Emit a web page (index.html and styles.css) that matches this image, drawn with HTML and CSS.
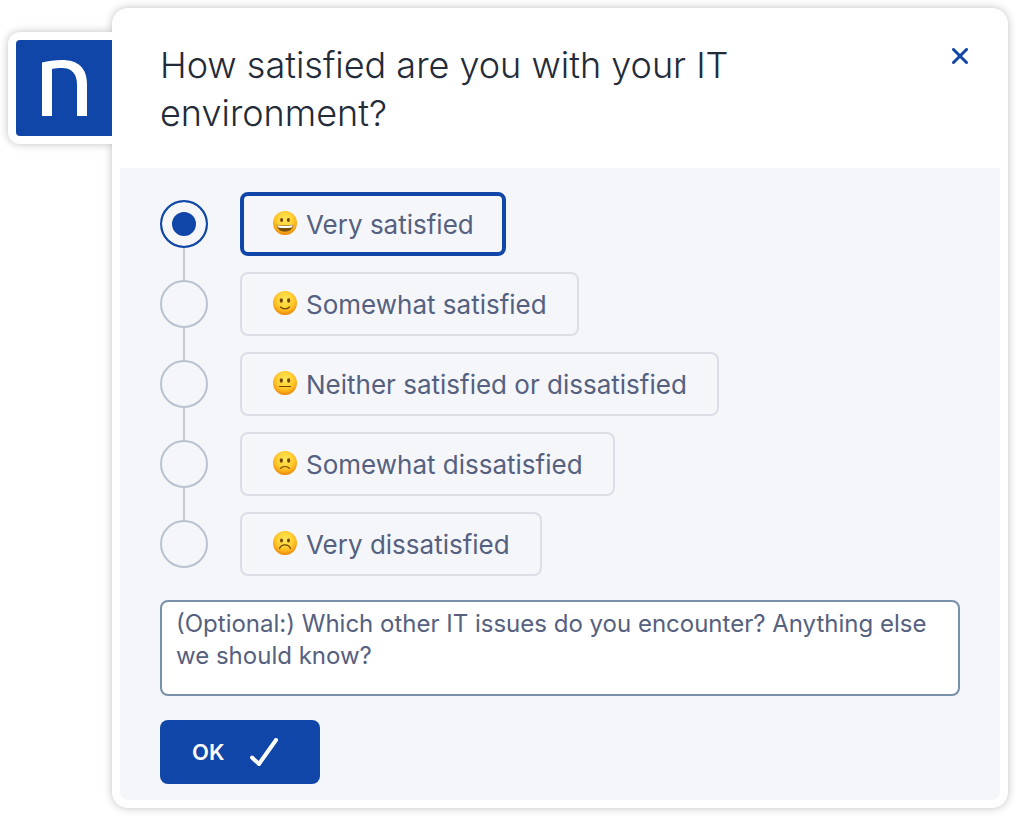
FILE: index.html
```html
<!DOCTYPE html>
<html lang="en">
<head>
    <meta charset="UTF-8">
    <meta name="viewport" content="width=device-width, initial-scale=1.0">
    <title>IT Satisfaction Survey</title>
    <link rel="stylesheet" href="styles.css">
</head>
<body>

<!-- Shared parts of the faces -->
<svg class="defs" width="0" height="0" aria-hidden="true">
    <defs>
        <radialGradient id="skin" cx="0.5" cy="0.36" r="0.64">
            <stop offset="0" stop-color="#ffe65c"/>
            <stop offset="0.45" stop-color="#ffd437"/>
            <stop offset="0.75" stop-color="#fdb41c"/>
            <stop offset="1" stop-color="#e88405"/>
        </radialGradient>
        <g id="face">
            <circle cx="12" cy="12" r="12" fill="url(#skin)"/>
            <ellipse cx="8.300" cy="9.500" rx="1.600" ry="2.300" fill="#704506"/>
            <ellipse cx="15.700" cy="9.500" rx="1.600" ry="2.300" fill="#704506"/>
        </g>
    </defs>
</svg>

<div class="survey">
    <div class="logo">
        <svg viewBox="0 0 96 96" role="img" aria-label="Logo">
            <path fill="#fff" d="M26 76V22.600C32 21 39 20 46 20C62 20 71 28 71 44V76H61V45C61 34 56 28 46 28C42 28 39 28.400 36 29V76Z"/>
        </svg>
    </div>

    <form class="panel">
        <header class="header">
            <h1>How satisfied are you with your IT environment?</h1>
            <button type="button" class="close" aria-label="Close">
                <svg viewBox="0 0 16 16"><path d="M1.500 1.500L14.500 14.500M14.500 1.500L1.500 14.500"/></svg>
            </button>
        </header>

        <div class="content">
            <!-- ANSWERS -->
            <div class="options" role="radiogroup" aria-label="Satisfaction">
                <div class="option">
                    <input type="radio" name="satisfaction" id="verySatisfied" checked>
                    <label for="verySatisfied">
                        <svg class="emoji" viewBox="0 0 24 24" aria-hidden="true">
                            <circle cx="12" cy="12" r="12" fill="url(#skin)"/>
                            <ellipse cx="8.600" cy="9" rx="1.500" ry="2" fill="#704506"/>
                            <ellipse cx="15.400" cy="9" rx="1.500" ry="2" fill="#704506"/>
                            <path d="M3.600 13.800C9 14.700 15 14.700 20.400 13.800C20 18.200 16.500 20.700 12 20.700S4 18.200 3.600 13.800Z" fill="#77500c"/>
                            <path d="M4.200 14.300C9 15.200 15 15.200 19.800 14.300C19.600 15.500 19.300 16.200 18.600 16.500C14.500 17.300 9.500 17.300 5.400 16.500C4.700 16.200 4.400 15.500 4.200 14.300Z" fill="#fff"/>
                        </svg>
                        <span>Very satisfied</span>
                    </label>
                </div>
                <div class="option">
                    <input type="radio" name="satisfaction" id="somewhatSatisfied">
                    <label for="somewhatSatisfied">
                        <svg class="emoji" viewBox="0 0 24 24" aria-hidden="true">
                            <use href="#face"/>
                            <path class="mouth" d="M7.500 16C9.800 18.500 14.200 18.500 16.500 16"/>
                        </svg>
                        <span>Somewhat satisfied</span>
                    </label>
                </div>
                <div class="option">
                    <input type="radio" name="satisfaction" id="neither">
                    <label for="neither">
                        <svg class="emoji" viewBox="0 0 24 24" aria-hidden="true">
                            <use href="#face"/>
                            <path class="mouth" d="M6.500 15.500H17.500"/>
                        </svg>
                        <span>Neither satisfied or dissatisfied</span>
                    </label>
                </div>
                <div class="option">
                    <input type="radio" name="satisfaction" id="somewhatDissatisfied">
                    <label for="somewhatDissatisfied">
                        <svg class="emoji" viewBox="0 0 24 24" aria-hidden="true">
                            <use href="#face"/>
                            <path class="mouth" d="M7.500 17.300C9.800 14.900 14.200 14.900 16.500 17.300"/>
                        </svg>
                        <span>Somewhat dissatisfied</span>
                    </label>
                </div>
                <div class="option">
                    <input type="radio" name="satisfaction" id="veryDissatisfied">
                    <label for="veryDissatisfied">
                        <svg class="emoji" viewBox="0 0 24 24" aria-hidden="true">
                            <circle cx="12" cy="12" r="12" fill="url(#skin)"/>
                            <ellipse cx="8.500" cy="9.500" rx="1.500" ry="1.900" fill="#704506"/>
                            <ellipse cx="15.500" cy="9.500" rx="1.500" ry="1.900" fill="#704506"/>
                            <path class="mouth" d="M6.500 17.500C8.500 12.700 15.500 12.700 17.500 17.500"/>
                        </svg>
                        <span>Very dissatisfied</span>
                    </label>
                </div>
            </div>

            <!-- COMMENT -->
            <textarea class="comment" aria-label="Comment" placeholder="(Optional:) Which other IT issues do you encounter? Anything else we should know?"></textarea>

            <button type="submit" class="submit">
                OK
                <svg viewBox="0 0 28 28" aria-hidden="true"><path d="M2 19.500L9 26L26 2"/></svg>
            </button>
        </div>
    </form>
</div>

</body>
</html>
```
FILE: styles.css
```css
* {
    box-sizing: border-box;
}
body {
    margin: 0;
    padding: 8px;
    background: white;
    font-family: Inter, sans-serif;
    color: #56607f;
}
.defs {
    position: absolute;
}
.survey {
    display: flex;
    align-items: flex-start;
}
.logo {
    z-index: 1;
    margin-top: 24px;
    padding: 8px 0 8px 8px;
    background: white;
    border-radius: 12px 0 0 12px;
    box-shadow: 0 0 8px rgba(0, 0, 0, 0.25);
    clip-path: inset(-16px 0 -16px -16px);
}
.logo svg {
    display: block;
    width: 96px;
    height: 96px;
    background: #1046a8;
    border-radius: 4px 0 0 4px;
}
.panel {
    flex: 1;
    padding: 8px;
    background: white;
    border-radius: 16px;
    box-shadow: 0 0 8px rgba(0, 0, 0, 0.25);
}
.header {
    display: flex;
    justify-content: space-between;
    align-items: flex-start;
    padding: 25px 24px 31px 40px;
}
h1 {
    max-width: 640px;
    margin: 0;
    font-size: 36px;
    font-weight: 300;
    line-height: 48px;
    color: #232a38;
}
.close {
    padding: 7px 8px;
    background: none;
    border: none;
    cursor: pointer;
}
.close svg {
    display: block;
    width: 16px;
    height: 16px;
}
.close path,
.submit path {
    fill: none;
    stroke: #1046a8;
    stroke-width: 3;
    stroke-linecap: round;
}
.content {
    display: flex;
    flex-direction: column;
    align-items: flex-start;
    gap: 24px;
    padding: 24px 40px 16px;
    background: #f4f6fa;
    border-radius: 0 0 8px 8px;
}
/* the background is the line that joins the radios */
.options {
    display: flex;
    flex-direction: column;
    gap: 16px;
    background: linear-gradient(#c2cad6, #c2cad6) 23px 32px / 2px calc(100% - 64px) no-repeat;
}
.option {
    display: flex;
    align-items: center;
    gap: 32px;
}
.option input {
    appearance: none;
    flex: none;
    width: 48px;
    height: 48px;
    margin: 0;
    background: #f4f6fa;
    border: 2px solid #b8c2d0;
    border-radius: 50%;
    cursor: pointer;
}
.option input:checked {
    background: #1046a8;
    border-color: #1046a8;
    box-shadow: inset 0 0 0 10px #f4f6fa;
}
.option label {
    display: flex;
    align-items: center;
    gap: 8px;
    height: 64px;
    padding: 0 30px;
    border: 2px solid #dcdee6;
    border-radius: 8px;
    font-size: 26px;
    cursor: pointer;
}
.option input:checked + label {
    padding: 0 28px;
    border: 4px solid #1046a8;
}
.emoji {
    width: 26px;
    height: 24px;
    margin-bottom: 2px;
}
.mouth {
    fill: none;
    stroke: #704506;
    stroke-width: 1.2;
    stroke-linecap: round;
}
.comment {
    display: block;
    width: 100%;
    height: 96px;
    padding: 6px 14px;
    background: white;
    border: 2px solid #7890a8;
    border-radius: 8px;
    font: 24px/32px Inter, sans-serif;
    color: #56607f;
    resize: none;
}
.comment::placeholder {
    color: #56607f;
}
.submit {
    display: flex;
    align-items: center;
    gap: 26px;
    height: 64px;
    padding: 0 42px 0 32px;
    background: #1046a8;
    border: none;
    border-radius: 8px;
    font: 600 22px Inter, sans-serif;
    color: white;
    cursor: pointer;
}
.submit svg {
    width: 28px;
    height: 28px;
}
.submit path {
    stroke: white;
    stroke-width: 4;
}
```
